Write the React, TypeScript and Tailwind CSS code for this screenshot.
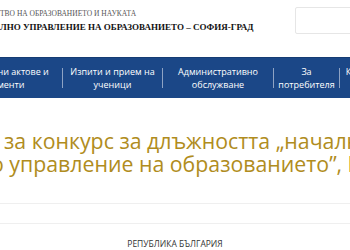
import React from "react";

const navItems = [
  { lines: ["Нормативни актове и", "документи"], w: "w-[122px] -ml-[60px]" },
  { lines: ["Изпити и прием на", "ученици"], w: "w-[99px]" },
  { lines: ["Административно", "обслужване"], w: "w-[110px]" },
  { lines: ["За", "потребителя"], w: "w-[65px]" },
  { lines: ["Контакти", ""], w: "w-[52px]" },
];

export default function App() {
  return (
    <div className="flex h-[250px] w-[350px] flex-col overflow-hidden bg-white">
      {/* header */}
      <div className="flex h-[57px] shrink-0 items-start justify-between">
        <div className="pt-[10px] font-['Liberation_Serif',serif] leading-none">
          <p className="whitespace-nowrap text-[7.5px] text-[#555]">ТВО НА ОБРАЗОВАНИЕТО И НАУКАТА</p>
          <p className="mt-[5px] whitespace-nowrap text-[9px] font-bold text-[#111]">
            ЛНО УПРАВЛЕНИЕ НА ОБРАЗОВАНИЕТО – СОФИЯ-ГРАД
          </p>
        </div>
        <div className="mt-[7px] -mr-[5px] h-[27px] w-[60px] shrink-0 rounded-[2px] border border-[#e6e6e6] bg-white" />
      </div>

      {/* nav */}
      <nav className="flex h-[41px] shrink-0 items-center border-t border-[#163c73] bg-[#1b4787] font-['Open_Sans',sans-serif] text-[9px] leading-[13px] text-white">
        {navItems.map((item, i) => (
          <React.Fragment key={i}>
            {i > 0 && <span className="h-[20px] w-px shrink-0 bg-[#8ea3c4]" />}
            <div className={`${item.w} shrink-0 whitespace-nowrap text-center`}>
              <div>{item.lines[0]}</div>
              <div>{item.lines[1] || "\u00a0"}</div>
            </div>
          </React.Fragment>
        ))}
      </nav>

      {/* title */}
      <div className="h-[106px] shrink-0 border-b border-[#efefef] pt-[31px]">
        <h1 className="font-['Open_Sans',sans-serif] text-[21.3px] leading-[23px] text-[#b08c20]">
          <div className="whitespace-nowrap pl-[4px]">за конкурс за длъжността „началник</div>
          <div className="-ml-[9px] whitespace-nowrap">о управление на образованието”, Регионално</div>
        </h1>
      </div>
      <div className="h-[20px] shrink-0 border-b border-[#efefef]" />

      <p className="pt-[16px] text-center font-['Open_Sans',sans-serif] text-[8.5px] leading-none text-[#333]">
        РЕПУБЛИКА БЪЛГАРИЯ
      </p>
    </div>
  );
}
